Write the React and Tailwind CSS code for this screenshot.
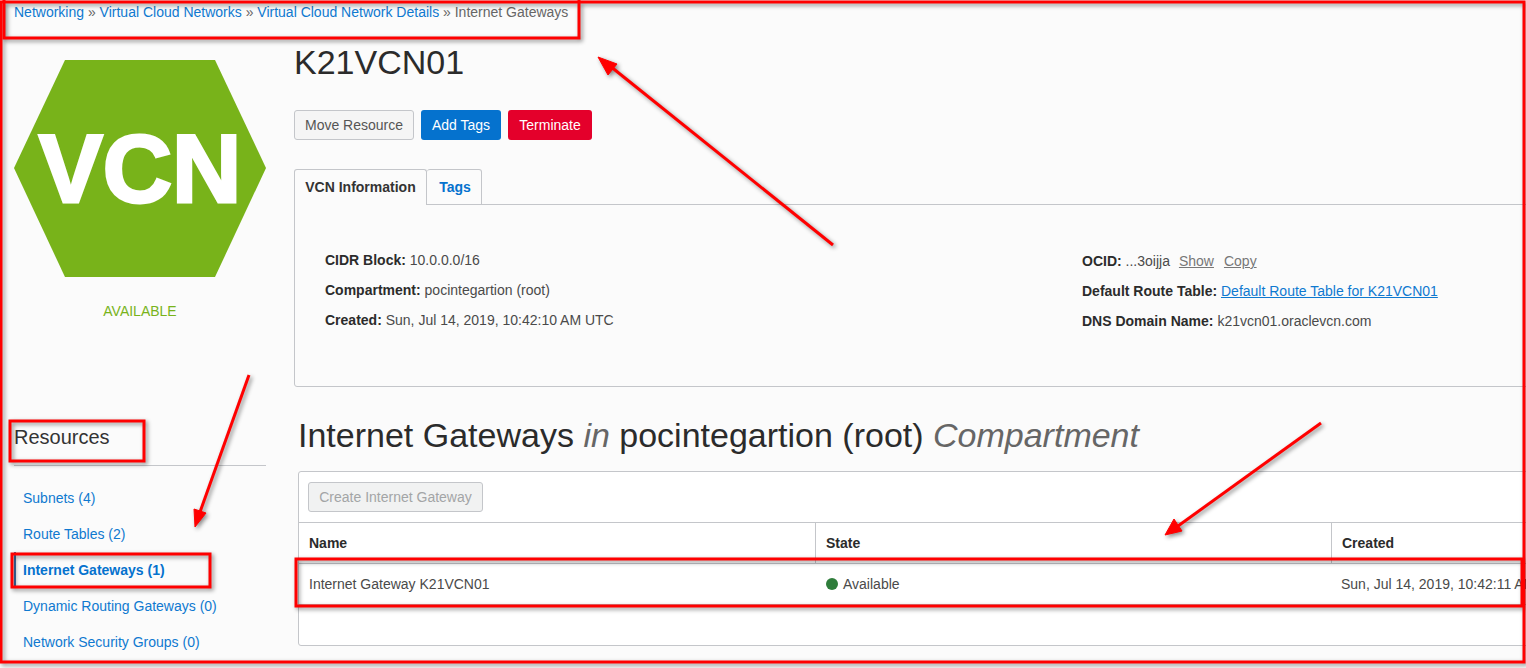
const link = 'text-[#0f79d0]'

function Field({ label, children }) {
  return (
    <div className="h-[30px] leading-[30px] whitespace-nowrap">
      <span className="font-bold text-[#2b2b2b]">{label}:</span> {children}
    </div>
  )
}

function ResourceItem({ children, active }) {
  return (
    <div
      className={
        active
          ? 'h-[36px] flex items-center pl-[7px] border-l-[2px] border-[#3f6fa8] font-bold text-[#0572ce]'
          : 'h-[36px] flex items-center pl-[9px] text-[#0f79d0]'
      }
    >
      {children}
    </div>
  )
}

function Sidebar() {
  return (
    <aside className="w-[252px] shrink-0">
      <svg width="252" height="217" viewBox="0 0 252 217" className="mt-[17px] block">
        <polygon points="51,0 201,0 252,108 201,217 51,217 0,108" fill="#78b31a" />
        <text x="126" y="142" textAnchor="middle" fill="#fff" stroke="#fff" strokeWidth="3" fontSize="96" fontWeight="700" fontFamily="Liberation Sans">VCN</text>
      </svg>
      <div className="mt-[25px] text-center text-[14px] leading-[18px] text-[#78b31a]">AVAILABLE</div>
      <div className="mt-[105px] text-[20px] leading-[24px] text-[#333] h-[36px] border-b border-[#c4c6ca] box-content pb-[4px]">Resources</div>
      <div className="mt-[14px] text-[14px]">
        <ResourceItem>Subnets (4)</ResourceItem>
        <ResourceItem>Route Tables (2)</ResourceItem>
        <ResourceItem active>Internet Gateways (1)</ResourceItem>
        <ResourceItem>Dynamic Routing Gateways (0)</ResourceItem>
        <ResourceItem>Network Security Groups (0)</ResourceItem>
      </div>
    </aside>
  )
}

function InfoPanel() {
  return (
    <div className="mt-[29px]">
      <div className="flex h-[36px] items-end">
        <div className="h-[36px] w-[133px] border border-b-0 border-[#c4c6ca] rounded-t-[3px] bg-[#fbfbfb] flex items-center justify-center font-bold text-[#333] relative z-10">VCN Information</div>
        <div className="h-[36px] w-[55px] border border-l-0 border-[#c4c6ca] rounded-t-[3px] flex items-center justify-center pl-[2px] font-bold text-[#0572ce]">Tags</div>
      </div>
      <div className="-mt-px h-[183px] border border-[#c4c6ca] rounded-b-[3px] flex pl-[30px] pt-[40px] text-[#4a4a4a]">
        <div className="w-[757px]">
          <Field label="CIDR Block">10.0.0.0/16</Field>
          <Field label="Compartment">pocintegartion (root)</Field>
          <Field label="Created">Sun, Jul 14, 2019, 10:42:10 AM UTC</Field>
        </div>
        <div className="pt-px">
          <Field label="OCID">
            ...3oijja<a className="underline text-[#777] ml-[9px]">Show</a><a className="underline text-[#777] ml-[10px]">Copy</a>
          </Field>
          <Field label="Default Route Table"><a className={`underline ${link}`}>Default Route Table for K21VCN01</a></Field>
          <Field label="DNS Domain Name">k21vcn01.oraclevcn.com</Field>
        </div>
      </div>
    </div>
  )
}

function GatewayTable() {
  return (
    <div className="ml-[4px] mt-[16px] h-[175px] bg-white border border-[#c4c6ca] rounded-[3px]">
      <div className="h-[51px] border-b border-[#c4c6ca] flex items-center pl-[9px]">
        <button className="h-[30px] w-[175px] border border-[#c4c6ca] rounded-[3px] bg-[#f1f2f2] text-[#a3a5a6]">Create Internet Gateway</button>
      </div>
      <div className="grid grid-cols-[517px_516px_1fr]">
        <div className="h-[41px] flex items-center pl-[10px] font-bold text-[#2b2b2b] border-r border-b border-[#c4c6ca]">Name</div>
        <div className="h-[41px] flex items-center pl-[10px] font-bold text-[#2b2b2b] border-r border-b border-[#c4c6ca]">State</div>
        <div className="h-[41px] flex items-center pl-[10px] font-bold text-[#2b2b2b] border-b border-[#c4c6ca]">Created</div>
        <div className="h-[41px] flex items-center pl-[10px] text-[#4a4a4a] border-b border-[#c4c6ca]">Internet Gateway K21VCN01</div>
        <div className="h-[41px] flex items-center pl-[10px] text-[#4a4a4a] border-b border-[#c4c6ca]">
          <span className="w-[12px] h-[12px] rounded-full bg-[#2f7d3b] mr-[5px]" />Available
        </div>
        <div className="h-[41px] flex items-center pl-[9px] text-[#4a4a4a] border-b border-[#c4c6ca] whitespace-nowrap">Sun, Jul 14, 2019, 10:42:11 AM UTC</div>
      </div>
    </div>
  )
}

// red boxes and arrows someone drew over the screenshot
function Annotations() {
  const box = { fill: 'none', stroke: '#ff0000', strokeWidth: 3 }
  return (
    <svg width="1526" height="668" className="absolute inset-0 pointer-events-none" style={{ filter: 'drop-shadow(2px 2px 2px rgba(0,0,0,0.45))' }}>
      <rect x="1" y="2" width="1523" height="660" {...box} />
      <rect x="4" y="-2" width="575" height="40" {...box} />
      <rect x="10" y="421" width="134" height="40" {...box} />
      <rect x="12" y="554" width="198" height="33" {...box} />
      <rect x="296" y="559" width="1226" height="47" {...box} />
      <g stroke="#ff0000" strokeWidth="3" fill="#ff0000">
        <line x1="833" y1="245" x2="610" y2="66" />
        <polygon points="598,57 617,64 608,75" strokeWidth="1" />
        <line x1="249" y1="375" x2="200" y2="512" />
        <polygon points="195,527 194,509 206,513" strokeWidth="1" />
        <line x1="1321" y1="423" x2="1178" y2="526" />
        <polygon points="1165,535 1174,519 1182,531" strokeWidth="1" />
      </g>
    </svg>
  )
}

export default function App() {
  return (
    <div className="relative w-[1526px] h-[668px] overflow-hidden bg-[#fbfbfb] text-[14px] text-[#333] font-['Liberation_Sans',Arial,sans-serif]">
      <div className="h-[43px] pl-[14px] pt-[3px] leading-[18px] text-[#666]">
        <a className={link}>Networking</a> » <a className={link}>Virtual Cloud Networks</a> » <a className={link}>Virtual Cloud Network Details</a> » Internet Gateways
      </div>
      <div className="flex pl-[14px]">
        <Sidebar />
        <main className="ml-[28px] w-[1400px] shrink-0">
          <h1 className="text-[34px] leading-[40px] -mt-[1px] text-[#2b2b2b]">K21VCN01</h1>
          <div className="mt-[28px] flex gap-[7px]">
            <button className="h-[30px] w-[120px] border border-[#c4c6ca] rounded-[3px] bg-[#f5f5f5] text-[#555]">Move Resource</button>
            <button className="h-[30px] w-[80px] rounded-[3px] bg-[#0572ce] text-white">Add Tags</button>
            <button className="h-[30px] w-[84px] rounded-[3px] bg-[#e4002b] text-white">Terminate</button>
          </div>
          <InfoPanel />
          <h2 className="ml-[4px] mt-[28px] text-[34px] leading-[40px] text-[#2b2b2b] whitespace-nowrap">
            Internet Gateways <em className="text-[#666]">in</em> pocintegartion (root) <em className="text-[#666]">Compartment</em>
          </h2>
          <GatewayTable />
        </main>
      </div>
      <Annotations />
    </div>
  )
}
